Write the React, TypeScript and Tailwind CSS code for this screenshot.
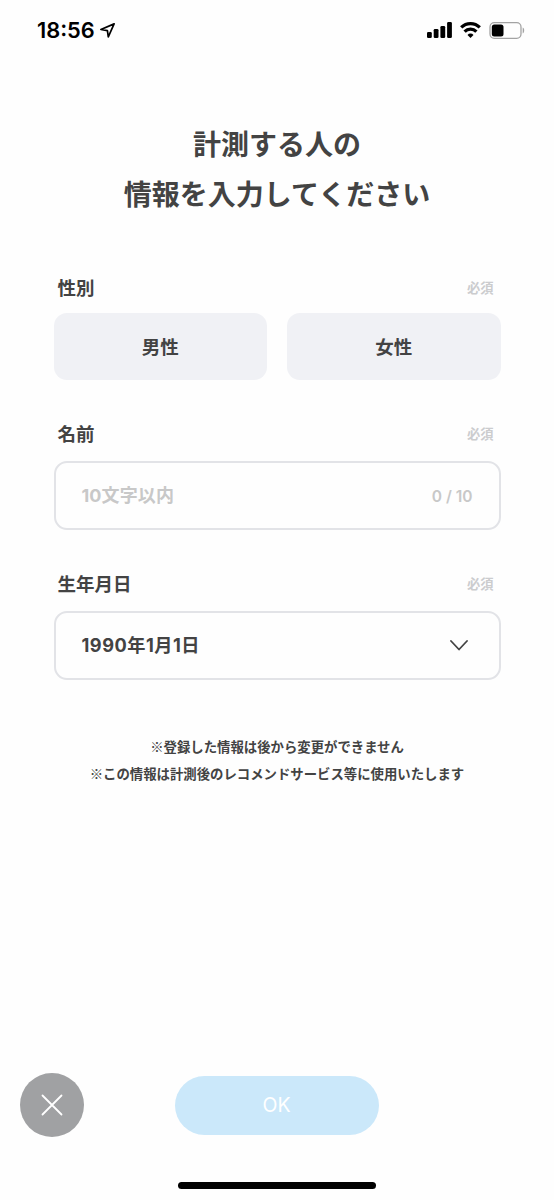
import type { ReactNode } from 'react';

const genders = ['男性', '女性'];

const notes = [
  '※登録した情報は後から変更ができません',
  '※この情報は計測後のレコメンドサービス等に使用いたします',
];

const StatusBar = () => (
  <header className="flex h-[60px] items-center pl-[37px] pr-[29px] text-black">
    <span className="pt-0.5 text-[21.8px] font-semibold leading-none">18:56</span>
    <svg className="ml-[5px]" width="15" height="15" viewBox="0 0 15 15" fill="none" stroke="currentColor" strokeWidth="1.7" strokeLinejoin="round">
      <path d="M14.1.9.9 6.5l6.5 1.1.9 6.2z" />
    </svg>
    <svg className="ml-auto" width="25" height="16" viewBox="0 0 25 16" fill="currentColor">
      <rect x="0" y="10" width="4.8" height="6" rx="1.3" />
      <rect x="6.7" y="7" width="4.8" height="9" rx="1.3" />
      <rect x="13.4" y="4" width="4.8" height="12" rx="1.3" />
      <rect x="20.1" y="0" width="4.8" height="16" rx="1.3" />
    </svg>
    <svg className="ml-2" width="21" height="16" viewBox="0 0 21 16" fill="none" stroke="currentColor" strokeWidth="3.2">
      <path d="M1.2 5.4a13.3 13.3 0 0 1 18.6 0" />
      <path d="M4.6 9.6a8.2 8.2 0 0 1 11.8 0" />
      <path d="M7.5 12.9a4.1 4.1 0 0 1 6 0L10.5 16z" fill="currentColor" stroke="none" />
    </svg>
    <svg className="ml-2" width="36" height="17" viewBox="0 0 36 17">
      <rect x="1" y="0.7" width="31" height="15.6" rx="4.3" fill="none" stroke="#a3a3a3" strokeWidth="1.3" />
      <rect x="2.8" y="2.5" width="11.7" height="12" rx="2.5" fill="#000" />
      <path d="M33.7 5.6c2 .7 2 5.1 0 5.8z" fill="#a3a3a3" />
    </svg>
  </header>
);

const Field = ({ label, children }: { label: string; children: ReactNode }) => (
  <section>
    <div className="flex h-7 items-center justify-between pl-1 pr-[7px]">
      <h2 className="text-[18.5px] font-bold leading-7">{label}</h2>
      <span className="text-[13.3px] font-bold leading-7 text-[#cbccce]">必須</span>
    </div>
    {children}
  </section>
);

export default function App() {
  return (
    <div className="flex h-[1200px] w-[554px] flex-col bg-[#fefefe] font-['Inter','Noto_Sans_CJK_JP',sans-serif] text-[#434343]">
      <StatusBar />
      <main className="flex flex-col px-[53.5px] pt-[60px]">
        <h1 className="text-center text-[28px] font-bold leading-[50px]">
          計測する人の
          <br />
          情報を入力してください
        </h1>

        <div className="mt-[54px] flex flex-col gap-10">
          <Field label="性別">
            <div className="mt-[11px] grid h-[67px] grid-cols-2 gap-5">
              {genders.map((gender) => (
                <button key={gender} className="rounded-[13px] bg-[#f0f1f5] pt-0.5 text-[18.5px] font-bold">
                  {gender}
                </button>
              ))}
            </div>
          </Field>

          <Field label="名前">
            <div className="mt-[13px] flex h-[69px] items-center justify-between rounded-[13px] border-2 border-[#e2e3e7] px-[26px] font-bold text-[#c8c8c8]">
              <span className="text-[18px] tracking-[0.1px]">10文字以内</span>
              <span className="pt-0.5 text-[15.5px] font-semibold">0 / 10</span>
            </div>
          </Field>

          <Field label="生年月日">
            <div className="mt-[13px] flex h-[69px] items-center justify-between rounded-[13px] border-2 border-[#e2e3e7] pl-[26px] pr-[30.5px] font-bold">
              <span className="text-[18.2px] tracking-[0.5px]">1990年1月1日</span>
              <svg width="18" height="11" viewBox="0 0 18 11" fill="none" stroke="currentColor" strokeWidth="1.8" strokeLinecap="round" strokeLinejoin="round">
                <path d="m1 1 8 8.5L17 1" />
              </svg>
            </div>
          </Field>
        </div>

        <div className="-mx-8 mt-[53px] text-center font-['Noto_Sans_CJK_JP',sans-serif] text-[13.38px] font-bold leading-[27px]">
          {notes.map((note) => (
            <p key={note}>{note}</p>
          ))}
        </div>
      </main>

      <footer className="mt-auto">
        <div className="grid grid-cols-[155px_204px_1fr] items-center pl-5">
          <button aria-label="閉じる" className="flex size-16 items-center justify-center rounded-full bg-[#a0a1a3] text-white">
            <svg width="22" height="22" viewBox="0 0 22 22" fill="none" stroke="currentColor" strokeWidth="1.8" strokeLinecap="round">
              <path d="m1.5 1.5 19 19M20.5 1.5l-19 19" />
            </svg>
          </button>
          <button className="h-[59px] rounded-full bg-[#cbe8fa] pr-px pt-0.5 text-[19.5px] text-white">OK</button>
        </div>
        <div className="mx-auto mb-[11px] mt-[45px] h-[7px] w-[198px] rounded-full bg-black" />
      </footer>
    </div>
  );
}
